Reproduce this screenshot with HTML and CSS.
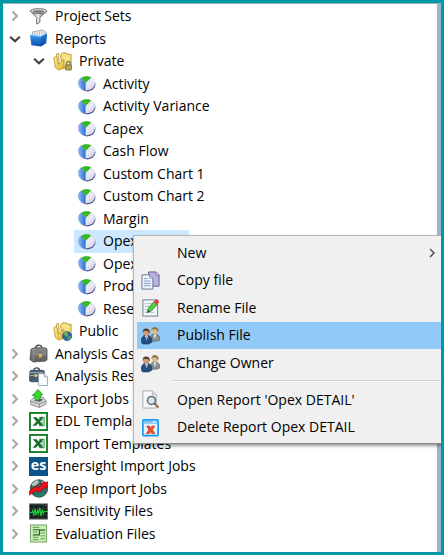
FILE: index.html
```html
<!DOCTYPE html>
<html lang="en">
<head>
<meta charset="utf-8">
<title>Project explorer</title>
<meta name="viewport" content="width=device-width, initial-scale=1">
<link rel="stylesheet" href="styles.css">
</head>
<body>
<svg class="defs" aria-hidden="true">
  <defs>
    <linearGradient id="g-blue" x1="0" x2="1"><stop offset="0" stop-color="#9dbcf0"/><stop offset="1" stop-color="#1d6cd4"/></linearGradient>
    <linearGradient id="g-silver" x1="0" x2="1" y1="0" y2="1"><stop offset="0" stop-color="#b4b4d6"/><stop offset=".6" stop-color="#ececf6"/><stop offset="1" stop-color="#c4c4de"/></linearGradient>
    <linearGradient id="g-metal" x1="0" x2="1"><stop offset="0" stop-color="#777"/><stop offset=".45" stop-color="#eee"/><stop offset="1" stop-color="#444"/></linearGradient>
    <linearGradient id="g-folder" x1="0" x2="1" y1="0" y2="1"><stop offset="0" stop-color="#fff3a8"/><stop offset="1" stop-color="#e3b12c"/></linearGradient>
    <linearGradient id="g-box" x1="0" x2="0" y1="0" y2="1"><stop offset="0" stop-color="#3f9cf0"/><stop offset="1" stop-color="#0a4fb0"/></linearGradient>
    <linearGradient id="g-case" x1="0" x2="0" y1="0" y2="1"><stop offset="0" stop-color="#8c8c88"/><stop offset="1" stop-color="#5b5b59"/></linearGradient>
    <symbol id="closed" viewBox="0 0 12 12"><path d="M3.500 1.500 8 6 3.500 10.500" fill="none" stroke="#a6a6a6" stroke-width="2"/></symbol>
    <symbol id="open" viewBox="0 0 12 12"><path d="M1.200 3.700 6 8.200 10.800 3.700" fill="none" stroke="#404040" stroke-width="2.200"/></symbol>
    <symbol id="pie" viewBox="0 0 20 20">
      <ellipse cx="10.800" cy="11" rx="8.600" ry="7.300" fill="#55558f"/>
      <ellipse cx="10" cy="9.800" rx="8.900" ry="7.400" fill="url(#g-silver)"/>
      <path d="M9.500 9.500 4.300 4C0 6.500 0 12.500 4 15.300c2 1.400 3.500 1.900 5.500 1.900Z" fill="url(#g-blue)"/>
      <path d="M9.500 9.500 4.300 4C7 1.800 12.500 1.800 15.200 3.800Z" fill="#35b824"/>
      <path d="M15.200 3.800 9.500 9.500v7.700" fill="none" stroke="#f4f4ff" stroke-width=".8"/>
    </symbol>
    <symbol id="funnel" viewBox="0 0 20 20">
      <path d="M1.500 4.500 8 11v7l3.500-2v-5l7-6.500Z" fill="url(#g-metal)" stroke="#555" stroke-width=".8"/>
      <ellipse cx="10" cy="4.300" rx="8.800" ry="2.600" fill="#d9d9d9" stroke="#666" stroke-width=".9"/>
      <ellipse cx="10" cy="4.700" rx="6" ry="1.400" fill="#777"/>
    </symbol>
    <symbol id="reports" viewBox="0 0 20 20">
      <path d="M3 8 4 3 14.500 1 18 3.500V9Z" fill="#f3f3f3" stroke="#8f8f8f" stroke-width=".8"/>
      <path d="M6 3.500v4M8.500 3v4M11 2.500v4M13.500 2v5M16 3v4" stroke="#999" stroke-width=".7"/>
      <path d="M1 6.500 13 8 19 5 18 15l-5.500 3.500L2.500 17Z" fill="url(#g-box)"/>
      <path d="M1 6.500 13 8 19 5" fill="none" stroke="#6bbcff" stroke-width="1.200"/>
      <path d="m13 8-.5 10.500L18 15l1-10Z" fill="#0b4ba5" opacity=".5"/>
    </symbol>
    <symbol id="folder" viewBox="0 0 20 20">
      <path d="M8 3.500 10 1h4.500l1 1.500H19V16l-9 1Z" fill="#f8e289" stroke="#b58a1a" stroke-width=".9"/>
      <path d="M3.500 2 6 1.500 6.500 14 4 15Z" fill="#fff3b5" stroke="#b58a1a" stroke-width=".8"/>
      <path d="M.800 6 4 4.500 5.500 13 11.500 7.500V17L6 19l-3.500-2.500Z" fill="url(#g-folder)" stroke="#b98c18" stroke-width=".8"/>
    </symbol>
    <symbol id="private" viewBox="0 0 20 20">
      <use href="#folder"/>
      <path d="M14.200 14v-2c0-3 4-3 4 0v2" fill="none" stroke="#77786a" stroke-width="1.300"/>
      <rect x="13" y="13.500" width="6.500" height="5.500" rx=".8" fill="#b6a34d" stroke="#6d663e" stroke-width=".8"/>
    </symbol>
    <symbol id="public" viewBox="0 0 20 20">
      <use href="#folder"/>
      <circle cx="14.800" cy="14.800" r="4.800" fill="#2768ae" stroke="#20486f" stroke-width=".7"/>
      <path d="M10.800 13c1-3 4-3.500 5-2.500l-1 2 1.500 1-2 2.500-1-1.500ZM16 15.500l2.500-1-.5 3-2 1.500Z" fill="#69b848"/>
    </symbol>
    <symbol id="briefcase" viewBox="0 0 20 20">
      <path d="M7 4.500c0-4 6-4.500 6.500-.5" fill="none" stroke="#555" stroke-width="1.500"/>
      <path d="M2 5.500 5 4h12.500L19 5.500v11L17.500 18l-13 1L1 16.500Z" fill="url(#g-case)" stroke="#50504e" stroke-width=".8"/>
      <path d="M5 5 4.500 18M5 10.500h13.500" stroke="#a3a39e" stroke-width=".7"/>
      <rect x="10.500" y="10.500" width="3" height="3.500" fill="#efb82b"/>
    </symbol>
    <symbol id="results" viewBox="0 0 20 20">
      <path d="M5 3.500C5 0 11 0 11 3.500" fill="none" stroke="#384a5b" stroke-width="1.400"/>
      <path d="M1 4.500 2 3.500h13l1 1v11H2L.500 14.500Z" fill="#485e72" stroke="#2e4051" stroke-width=".8"/>
      <path d="M1 6h14M1 9h10" stroke="#9db0bd"/>
      <rect x="6" y="7.500" width="2.500" height="3" fill="#e5bd4b"/>
      <path d="M10 7h6l3.500 3.500V19.500H10Z" fill="#fafcff" stroke="#8694a5" stroke-width=".8"/>
      <path d="M16 7v3.500h3.500" fill="#d8e1ec" stroke="#8694a5" stroke-width=".7"/>
    </symbol>
    <symbol id="export" viewBox="0 0 20 20">
      <path d="m1.500 12.500 4-4h9l3.500 4v3.500L11 19.500 2 16.500Z" fill="#d4d4d4" stroke="#777" stroke-width=".8"/>
      <path d="m2 13 9 2.800 7-3.300M11 15.500v4" fill="none" stroke="#8f8f8f"/>
      <path d="m5 12 5-2 5 1-3.500 2.500Z" fill="#555"/>
      <path d="m3.500 7 6-6.500L14.500 6l-2.300.5c0 3-1 5-4 6C6.500 11 6 9 6 6.600Z" fill="#3bd72e" stroke="#179418" stroke-width=".9"/>
    </symbol>
    <symbol id="excel" viewBox="0 0 20 20">
      <rect x="1" y="1" width="18" height="18" fill="#fff" stroke="#178026" stroke-width="2"/>
      <path d="M10.500 5.500H16v9h-5.500" fill="#e3f1e4" stroke="#4ba15a"/>
      <path d="M11 8.500h5M11 11.500h5" stroke="#4ba15a" stroke-width=".9"/>
      <path d="M4 5.500h4.200L9.800 7.800 12 5.500h3.500L11.600 10l3.900 4.500h-4.200L9.500 12.200 7.300 14.500H3.800L7.800 10Z" fill="#17702b"/>
    </symbol>
    <symbol id="enersight" viewBox="0 0 20 20">
      <rect width="20" height="20" fill="#0d5388"/>
      <text x="10" y="14" text-anchor="middle" class="es">es</text>
    </symbol>
    <symbol id="peep" viewBox="0 0 20 20">
      <circle cx="10.500" cy="10" r="9.200" fill="#3f6560" stroke="#263e42" stroke-width=".8"/>
      <path d="M3 5 8 1l3 2-3 3-4 2ZM13 2.500l3 .5-1 2-2-1Z" fill="#b9cbbf"/>
      <path d="M4 15c4 2 8 1 14-1l-4 4.500-6 .5Z" fill="#18806b"/>
      <path d="M.500 12.500 7 7.500 10 9l3-2.500-1.500-1.700L20 3l-1 7-2-1.500-6.500 5.500-3-2L.500 17Z" fill="#f20f16" stroke="#780e19" stroke-width=".6"/>
    </symbol>
    <symbol id="sensitivity" viewBox="0 0 20 20">
      <rect x=".5" y="2" width="19" height="16" fill="#171f20" stroke="#6b7171"/>
      <path d="M1 7h18M1 14h18M5 3v15M10 3v15M15 3v15" stroke="#36423e" stroke-width=".7"/>
      <path d="M1 11h2l1-2 1 5 1.500-7 1 7 1.500-5 1 3 1.500-6 1 9 1.500-7 1 4 1-2h4" fill="none" stroke="#23d63b" stroke-width="1.100"/>
      <path d="M17 4h1.500" stroke="#ee3534"/>
    </symbol>
    <symbol id="evaluation" viewBox="0 0 20 20">
      <path d="M1.500 1h17v18h-17Z" fill="#c9f0ae" stroke="#709d65"/>
      <path d="M4 3.500h7M4 8.500h5M4 14h6M4 16.500h6M12 9.500h5M12 12.500h5M12 15.500h5" stroke="#5c9457"/>
      <path d="M4 6h7M4 11.500h7V6.500h6" fill="none" stroke="#2c582f" stroke-width="1.200"/>
    </symbol>
    <symbol id="copy" viewBox="0 0 20 20">
      <path d="M8 1h8l3 3v12H8Z" fill="#b9b6dd" stroke="#625b99"/>
      <path d="M15.500 1v3.500H19" fill="#eeecff" stroke="#625b99" stroke-width=".8"/>
      <path d="M1 4h8l3.500 3.500V19H1Z" fill="#eef4ff" stroke="#607495"/>
      <path d="M9 4v3.500h3.500M3 8h4M3 10.500h7M3 13h7M3 15.500h7" fill="none" stroke="#8297bd"/>
    </symbol>
    <symbol id="rename" viewBox="0 0 20 20">
      <rect x="2" y="2" width="15.500" height="17" fill="#f4f8fc" stroke="#667d8d"/>
      <path d="M4 6h8M4 9h6M4 12h4M4 15h10" stroke="#9eb3c4"/>
      <path d="M6.500 15.500 8 10.500 13.500 4l3.500 3-6 6.500Z" fill="#50cd39" stroke="#278629" stroke-width=".8"/>
      <path d="m13.500 4 1.700-2.200c1.500-.8 4 1 3.500 2.700L17 7Z" fill="#ee3537"/>
      <path d="m6.500 15.500 1-3.200 2 1.900Z" fill="#354b38"/>
    </symbol>
    <symbol id="people" viewBox="0 0 20 20">
      <path d="M10 16V10.500L13 8h3l3.500 3v4L16 16Z" fill="#8b9190" stroke="#535b5b" stroke-width=".6"/>
      <circle cx="14.500" cy="5" r="3.400" fill="#dcbd90"/>
      <path d="M11 5c-.5-5 7-5.500 7.500 0l-1 2-1-3-4-.5Z" fill="#8f7852"/>
      <path d="m13.500 9 1 5 1.500-5Z" fill="#f3f3ec"/>
      <path d="M.500 17.500V13L3.500 9.500h4L11.500 13v4l-3.500 2H2Z" fill="#214f7f" stroke="#173754" stroke-width=".6"/>
      <circle cx="5.500" cy="6.500" r="3.500" fill="#cf976b"/>
      <path d="M1.800 7C1 1.500 8.500 1 9.200 6l-.7 2-1-2.800L3 5Z" fill="#4d3a2c"/>
      <path d="m4 10 2 5 1.500-5Z" fill="#edf4fb"/><path d="m5.500 11 .6 3 .7-3Z" fill="#a3343a"/>
    </symbol>
    <symbol id="preview" viewBox="0 0 20 20">
      <path d="M2 1h10l4 4v14H2Z" fill="#f9fafb" stroke="#a6a9ac"/>
      <path d="M12 1v4h4" fill="#dadddf" stroke="#a6a9ac" stroke-width=".8"/>
      <circle cx="11" cy="11" r="4.200" fill="#d8e7ef" stroke="#626d74" stroke-width="1.600"/>
      <path d="m14 14 1.500 1.500" stroke="#4f565b" stroke-width="2"/><path d="m15.500 15.500 3 3" stroke="#a97649" stroke-width="2.400"/>
    </symbol>
    <symbol id="delete" viewBox="0 0 20 20">
      <rect x="2" y="2" width="16" height="16.500" rx=".8" fill="#e4f1fb" stroke="#189bf5" stroke-width="1.800"/>
      <path d="M3 4.500h14" stroke="#75c6fa" stroke-width="3"/><path d="M12 4.200h4" stroke="#e7f7ff" stroke-width="1.200"/>
      <path d="M6 8.500h3l1.200 1.700 1.500-1.700h2.800L12 12.300l2.800 4.200h-3.300l-1.500-2-1.500 2H5.500l2.600-4Z" fill="#ec4b28" stroke="#cd351f" stroke-width=".6"/>
    </symbol>
  </defs>
</svg>
<main class="panel">
  <ul class="tree" aria-label="Project explorer">
    <li class="row"><button class="toggle" aria-label="Expand Project Sets"><svg><use href="#closed"/></svg></button><svg class="icon"><use href="#funnel"/></svg><span class="label">Project Sets</span></li>
    <li class="row"><button class="toggle" aria-label="Collapse Reports"><svg><use href="#open"/></svg></button><svg class="icon"><use href="#reports"/></svg><span class="label">Reports</span></li>
    <li class="row level-2"><button class="toggle" aria-label="Collapse Private"><svg><use href="#open"/></svg></button><svg class="icon"><use href="#private"/></svg><span class="label">Private</span></li>
    <li class="row level-3"><svg class="icon"><use href="#pie"/></svg><span class="label">Activity</span></li>
    <li class="row level-3"><svg class="icon"><use href="#pie"/></svg><span class="label">Activity Variance</span></li>
    <li class="row level-3"><svg class="icon"><use href="#pie"/></svg><span class="label">Capex</span></li>
    <li class="row level-3"><svg class="icon"><use href="#pie"/></svg><span class="label">Cash Flow</span></li>
    <li class="row level-3"><svg class="icon"><use href="#pie"/></svg><span class="label">Custom Chart 1</span></li>
    <li class="row level-3"><svg class="icon"><use href="#pie"/></svg><span class="label">Custom Chart 2</span></li>
    <li class="row level-3"><svg class="icon"><use href="#pie"/></svg><span class="label">Margin</span></li>
    <li class="row level-3"><span class="selected"><svg class="icon"><use href="#pie"/></svg><span class="label">Opex DETAIL</span></span></li>
    <li class="row level-3"><svg class="icon"><use href="#pie"/></svg><span class="label">Opex</span></li>
    <li class="row level-3"><svg class="icon"><use href="#pie"/></svg><span class="label">Prod</span></li>
    <li class="row level-3"><svg class="icon"><use href="#pie"/></svg><span class="label">Rese</span></li>
    <li class="row level-2 leaf"><svg class="icon"><use href="#public"/></svg><span class="label">Public</span></li>
    <li class="row"><button class="toggle" aria-label="Expand Analysis Cases"><svg><use href="#closed"/></svg></button><svg class="icon"><use href="#briefcase"/></svg><span class="label">Analysis Cas</span></li>
    <li class="row"><button class="toggle" aria-label="Expand Analysis Results"><svg><use href="#closed"/></svg></button><svg class="icon"><use href="#results"/></svg><span class="label">Analysis Res</span></li>
    <li class="row"><button class="toggle" aria-label="Expand Export Jobs"><svg><use href="#closed"/></svg></button><svg class="icon"><use href="#export"/></svg><span class="label">Export Jobs</span></li>
    <li class="row"><button class="toggle" aria-label="Expand EDL Templates"><svg><use href="#closed"/></svg></button><svg class="icon"><use href="#excel"/></svg><span class="label">EDL Templa</span></li>
    <li class="row"><button class="toggle" aria-label="Expand Import Templates"><svg><use href="#closed"/></svg></button><svg class="icon"><use href="#excel"/></svg><span class="label">Import Templates</span></li>
    <li class="row"><button class="toggle" aria-label="Expand Enersight Import Jobs"><svg><use href="#closed"/></svg></button><svg class="icon"><use href="#enersight"/></svg><span class="label">Enersight Import Jobs</span></li>
    <li class="row"><button class="toggle" aria-label="Expand Peep Import Jobs"><svg><use href="#closed"/></svg></button><svg class="icon"><use href="#peep"/></svg><span class="label">Peep Import Jobs</span></li>
    <li class="row"><button class="toggle" aria-label="Expand Sensitivity Files"><svg><use href="#closed"/></svg></button><svg class="icon"><use href="#sensitivity"/></svg><span class="label">Sensitivity Files</span></li>
    <li class="row"><button class="toggle" aria-label="Expand Evaluation Files"><svg><use href="#closed"/></svg></button><svg class="icon"><use href="#evaluation"/></svg><span class="label">Evaluation Files</span></li>
  </ul>
  <div class="menu" role="menu">
    <button class="item" role="menuitem"><span class="icon"></span><span>New</span><svg class="arrow" viewBox="0 0 12 12"><path d="M4 2 8 6 4 10" fill="none" stroke="#555" stroke-width="1.500"/></svg></button>
    <button class="item" role="menuitem"><svg class="icon"><use href="#copy"/></svg><span>Copy file</span></button>
    <button class="item" role="menuitem"><svg class="icon"><use href="#rename"/></svg><span>Rename File</span></button>
    <button class="item active" role="menuitem"><svg class="icon"><use href="#people"/></svg><span>Publish File</span></button>
    <button class="item" role="menuitem"><svg class="icon"><use href="#people"/></svg><span>Change Owner</span></button>
    <hr class="separator">
    <button class="item" role="menuitem"><svg class="icon"><use href="#preview"/></svg><span>Open Report 'Opex DETAIL'</span></button>
    <button class="item" role="menuitem"><svg class="icon"><use href="#delete"/></svg><span>Delete Report Opex DETAIL</span></button>
  </div>
</main>
</body>
</html>
```
FILE: styles.css
```css
* { box-sizing: border-box; }

body {
  margin: 0;
  font-family: "Open Sans", "Noto Sans", sans-serif;
  font-size: 14px;
  line-height: 20px;
  color: #000;
}

button {
  padding: 0;
  border: 0;
  background: none;
  font: inherit;
  color: inherit;
  text-align: left;
}

.defs {
  position: absolute;
  width: 0;
  height: 0;
}

.panel {
  position: relative;
  display: flex;
  min-height: 100vh;
  border: 3px solid #0099a8;
  background: #fff;
  overflow: hidden;
}

.tree {
  flex: 1;
  display: grid;
  grid-auto-rows: 1fr;
  margin: 0;
  padding: 1px 0 7px 6px;
  list-style: none;
  border-top: 1px solid #a9b2b8;
  border-right: 4px solid #9db3cf;
}

.row,
.selected {
  display: flex;
  align-items: center;
  gap: 7px;
}

.row { white-space: nowrap; }

.level-2 { padding-left: 24px; }
.level-2.leaf { padding-left: 44px; }
.level-3 { padding-left: 68px; }

.selected {
  align-self: stretch;
  margin-left: -3px;
  padding-left: 3px;
  padding-right: 2px;
  background: #cce8ff;
}

.toggle {
  display: flex;
  width: 13px;
}

.toggle svg,
.arrow {
  width: 12px;
  height: 12px;
}

.icon {
  flex: none;
  width: 19px;
  height: 19px;
}

.es {
  font: bold 15px "Open Sans", sans-serif;
  fill: #fff;
}

.menu {
  position: absolute;
  top: 232px;
  left: 130px;
  right: 0;
  display: grid;
  grid-template-rows: repeat(5, 1fr) 9px repeat(2, 1fr);
  min-height: 209px;
  padding: 3px 0 2px 3px;
  border: 1px solid #b5b5b5;
  border-right: 0;
  border-bottom-color: #8b8b8b;
  background: #f0f0f0;
  box-shadow: 1px 2px 3px rgba(0, 0, 0, .4);
}

.item {
  display: flex;
  align-items: center;
  gap: 17px;
  padding-left: 4px;
}

.item.active { background: #91c9f7; }

.arrow { margin: 0 3px 0 auto; }

.separator {
  align-self: center;
  width: auto;
  margin: 0 0 0 35px;
  border: 0;
  border-top: 1px solid #d0d0d0;
  border-bottom: 1px solid #fafafa;
}
```
